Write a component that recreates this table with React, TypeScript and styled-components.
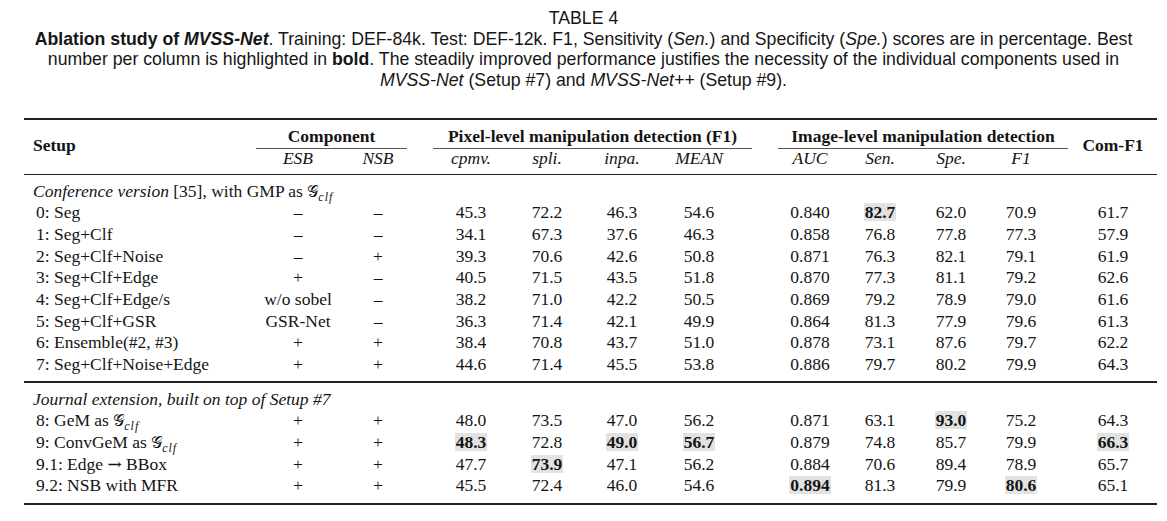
import React from "react";
import styled, { createGlobalStyle } from "styled-components";

const GlobalStyle = createGlobalStyle`
  html, body { margin: 0; padding: 0; background: #ffffff; }
  body {
    font-family: "Liberation Serif", "Times New Roman", serif;
    color: #141414;
  }
`;

const COLS = `[setup-s] 234px [setup-e esb-s] 80px [esb-e] 10px [nsb-s] 60px [nsb-e] 33px [cpmv-s] 60px [cpmv-e] 16px [spli-s] 60px [spli-e] 15px [inpa-s] 60px [inpa-e] 17px [mean-s] 60px [mean-e] 51px [auc-s] 60px [auc-e] 10px [sen-s] 60px [sen-e] 11px [spe-s] 60px [spe-e] 10px [f1-s] 60px [f1-e] 25px [com-s] 74px [com-e] 7px [end]`;

const Page = styled.div`
  width: 1167px;
  padding-top: 8px;
`;

const Caption = styled.div`
  font-family: "Liberation Sans", Arial, sans-serif;
  font-size: 17.7px;
  line-height: 20.5px;
  text-align: center;
  color: #161616;
`;

const CaptionLine = styled.div`
  white-space: nowrap;
`;

const Table = styled.div`
  width: 1133px;
  margin: 28px 10px 0 24px;
  font-size: 17.5px;
`;

const Rule = styled.div<{ $w: number }>`
  border-top: ${(p) => p.$w}px solid #222;
`;

const Header = styled.div`
  display: grid;
  grid-template-columns: ${COLS};
  grid-template-rows: auto auto;
  padding-bottom: 6.5px;
`;

const SpanHead = styled.div`
  font-weight: bold;
  align-self: center;
  line-height: 22px;
`;

const SetupHead = styled(SpanHead)`
  grid-column: setup-s / setup-e;
  grid-row: 1 / 3;
  padding-left: 9px;
  padding-top: 3px;
`;

const ComHead = styled(SpanHead)`
  grid-column: com-s / com-e;
  grid-row: 1 / 3;
  text-align: center;
  padding-top: 3px;
`;

const GroupHead = styled.div<{ $from: string; $to: string; $ml: number; $mr: number }>`
  grid-column: ${(p) => `${p.$from}-s / ${p.$to}-e`};
  grid-row: 1;
  margin-left: ${(p) => p.$ml}px;
  margin-right: ${(p) => p.$mr}px;
  padding-top: 6px;
  line-height: 21.5px;
  font-weight: bold;
  text-align: center;
  white-space: nowrap;
  border-bottom: 1.3px solid #555;
`;

const SubHead = styled.div<{ $col: string }>`
  grid-column: ${(p) => `${p.$col}-s / ${p.$col}-e`};
  grid-row: 2;
  font-style: italic;
  text-align: center;
  line-height: 19px;
`;

const Section = styled.div`
  padding: 5.5px 0;
`;

const Row = styled.div`
  display: grid;
  grid-template-columns: ${COLS};
  height: 21.7px;
  line-height: 21.7px;
  white-space: nowrap;
`;

const SectionLabel = styled.div`
  grid-column: setup-s / end;
  padding-left: 9px;
`;

const Label = styled.div`
  grid-column: setup-s / setup-e;
  padding-left: 12px;
`;

const Cell = styled.div<{ $col: string }>`
  grid-column: ${(p) => `${p.$col}-s / ${p.$col}-e`};
  text-align: center;
`;

const Best = styled.span`
  display: inline-block;
  font-weight: bold;
  background: #e2e2e2;
  padding: 0 1px;
  line-height: 18px;
`;

const Em = styled.i``;
const Strong = styled.b``;

const CalG = styled.span`
  font-family: "DejaVu Serif", "DejaVu Sans", serif;
  font-style: normal;
  font-size: 16px;
`;

const Sub = styled.span`
  font-style: italic;
  font-size: 12px;
  letter-spacing: 1px;
  position: relative;
  top: 4px;
`;

const Arrow = styled.span`
  font-family: "DejaVu Serif", serif;
  font-size: 17px;
`;

const Gclf = () => (
  <>
    <CalG>𝒢</CalG>
    <Sub>clf</Sub>
  </>
);

type RowData = {
  label: React.ReactNode;
  esb: string;
  nsb: string;
  vals: string[];
  best?: number[];
};

const VAL_COLS = ["cpmv", "spli", "inpa", "mean", "auc", "sen", "spe", "f1", "com"];

const conference: RowData[] = [
  { label: "0: Seg", esb: "–", nsb: "–", vals: ["45.3", "72.2", "46.3", "54.6", "0.840", "82.7", "62.0", "70.9", "61.7"], best: [5] },
  { label: "1: Seg+Clf", esb: "–", nsb: "–", vals: ["34.1", "67.3", "37.6", "46.3", "0.858", "76.8", "77.8", "77.3", "57.9"] },
  { label: "2: Seg+Clf+Noise", esb: "–", nsb: "+", vals: ["39.3", "70.6", "42.6", "50.8", "0.871", "76.3", "82.1", "79.1", "61.9"] },
  { label: "3: Seg+Clf+Edge", esb: "+", nsb: "–", vals: ["40.5", "71.5", "43.5", "51.8", "0.870", "77.3", "81.1", "79.2", "62.6"] },
  { label: "4: Seg+Clf+Edge/s", esb: "w/o sobel", nsb: "–", vals: ["38.2", "71.0", "42.2", "50.5", "0.869", "79.2", "78.9", "79.0", "61.6"] },
  { label: "5: Seg+Clf+GSR", esb: "GSR-Net", nsb: "–", vals: ["36.3", "71.4", "42.1", "49.9", "0.864", "81.3", "77.9", "79.6", "61.3"] },
  { label: "6: Ensemble(#2, #3)", esb: "+", nsb: "+", vals: ["38.4", "70.8", "43.7", "51.0", "0.878", "73.1", "87.6", "79.7", "62.2"] },
  { label: "7: Seg+Clf+Noise+Edge", esb: "+", nsb: "+", vals: ["44.6", "71.4", "45.5", "53.8", "0.886", "79.7", "80.2", "79.9", "64.3"] },
];

const journal: RowData[] = [
  { label: <>8: GeM as <Gclf /></>, esb: "+", nsb: "+", vals: ["48.0", "73.5", "47.0", "56.2", "0.871", "63.1", "93.0", "75.2", "64.3"], best: [6] },
  { label: <>9: ConvGeM as <Gclf /></>, esb: "+", nsb: "+", vals: ["48.3", "72.8", "49.0", "56.7", "0.879", "74.8", "85.7", "79.9", "66.3"], best: [0, 2, 3, 8] },
  { label: <>9.1: Edge <Arrow>→</Arrow> BBox</>, esb: "+", nsb: "+", vals: ["47.7", "73.9", "47.1", "56.2", "0.884", "70.6", "89.4", "78.9", "65.7"], best: [1] },
  { label: "9.2: NSB with MFR", esb: "+", nsb: "+", vals: ["45.5", "72.4", "46.0", "54.6", "0.894", "81.3", "79.9", "80.6", "65.1"], best: [4, 7] },
];

const DataRow = ({ r }: { r: RowData }) => (
  <Row>
    <Label>{r.label}</Label>
    <Cell $col="esb">{r.esb}</Cell>
    <Cell $col="nsb">{r.nsb}</Cell>
    {r.vals.map((v, i) => (
      <Cell key={i} $col={VAL_COLS[i]}>
        {r.best && r.best.includes(i) ? <Best>{v}</Best> : v}
      </Cell>
    ))}
  </Row>
);

const SUBS: [string, string][] = [
  ["esb", "ESB"],
  ["nsb", "NSB"],
  ["cpmv", "cpmv."],
  ["spli", "spli."],
  ["inpa", "inpa."],
  ["mean", "MEAN"],
  ["auc", "AUC"],
  ["sen", "Sen."],
  ["spe", "Spe."],
  ["f1", "F1"],
];

export default function App() {
  return (
    <Page>
      <GlobalStyle />
      <Caption>
        <CaptionLine>TABLE 4</CaptionLine>
        <CaptionLine>
          <Strong>
            Ablation study of <Em>MVSS-Net</Em>
          </Strong>
          . Training: DEF-84k. Test: DEF-12k. F1, Sensitivity (<Em>Sen.</Em>) and Specificity (
          <Em>Spe.</Em>) scores are in percentage. Best
        </CaptionLine>
        <CaptionLine>
          number per column is highlighted in <Strong>bold</Strong>. The steadily improved performance
          justifies the necessity of the individual components used in
        </CaptionLine>
        <CaptionLine>
          <Em>MVSS-Net</Em> (Setup #7) and <Em>MVSS-Net++</Em> (Setup #9).
        </CaptionLine>
      </Caption>

      <Table>
        <Rule $w={2} />
        <Header>
          <SetupHead>Setup</SetupHead>
          <GroupHead $from="esb" $to="nsb" $ml={-2} $mr={1}>
            Component
          </GroupHead>
          <GroupHead $from="cpmv" $to="mean" $ml={-8} $mr={-23}>
            Pixel-level manipulation detection (F1)
          </GroupHead>
          <GroupHead $from="auc" $to="f1" $ml={-2} $mr={-17}>
            Image-level manipulation detection
          </GroupHead>
          <ComHead>Com-F1</ComHead>
          {SUBS.map(([c, t]) => (
            <SubHead key={c} $col={c}>
              {t}
            </SubHead>
          ))}
        </Header>
        <Rule $w={1.3} />
        <Section>
          <Row>
            <SectionLabel>
              <Em>Conference version</Em> [35], with GMP as <Gclf />
            </SectionLabel>
          </Row>
          {conference.map((r, i) => (
            <DataRow key={i} r={r} />
          ))}
        </Section>
        <Rule $w={2} />
        <Section>
          <Row>
            <SectionLabel>
              <Em>Journal extension, built on top of Setup #7</Em>
            </SectionLabel>
          </Row>
          {journal.map((r, i) => (
            <DataRow key={i} r={r} />
          ))}
        </Section>
        <Rule $w={2} />
      </Table>
    </Page>
  );
}
